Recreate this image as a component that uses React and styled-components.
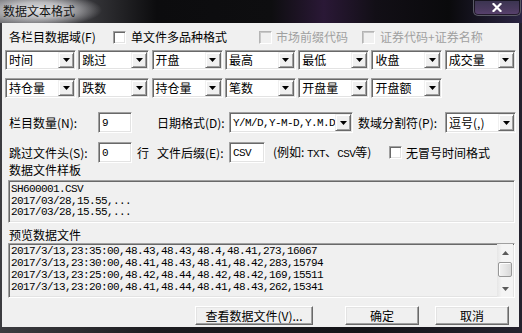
import React from 'react';
import styled, { createGlobalStyle } from 'styled-components';

const CJK = `"Noto Sans CJK SC", "Noto Sans", sans-serif`;
const MONO = `"Liberation Mono", "Noto Sans CJK SC", monospace`;

const Global = createGlobalStyle`
  html, body { margin: 0; padding: 0; background: #141416; }
  body { width: 522px; height: 333px; overflow: hidden; font-family: ${CJK}; }
`;

const Window = styled.div`
  width: 522px;
  height: 333px;
  box-sizing: border-box;
  display: flex;
  flex-direction: column;
  background: linear-gradient(90deg, #3c3c40 0%, #1c1c20 30%, #141418 70%, #24222e 100%);
`;

const TitleBar = styled.div`
  height: 23px;
  flex: none;
  display: flex;
  justify-content: space-between;
  align-items: flex-start;
  background:
    radial-gradient(ellipse 64px 17px at 38px 10px, rgba(228,228,230,0.97) 0%, rgba(205,205,208,0.85) 45%, rgba(140,140,145,0) 100%),
    linear-gradient(90deg, #6a6a6e 0%, #3a3a3e 16%, #0c0c0e 30%, #0e0e10 52%, #2a1836 62%, #120f16 72%, #0a0a0c 86%, #2a2442 100%);
`;

const TitleText = styled.span`
  font: 12px/14px ${CJK};
  color: #141414;
  margin: 4px 0 0 3px;
`;

const CloseBtn = styled.span`
  width: 48px;
  height: 16px;
  margin-right: 1px;
  box-sizing: border-box;
  border: 1px solid #5a5a66;
  border-top: none;
  border-radius: 0 0 5px 5px;
  background: linear-gradient(180deg, #3a3450 0%, #4a3a5e 60%, #5a4270 100%);
  box-shadow: inset 0 0 0 1px rgba(0,0,0,0.6);
  display: flex;
  align-items: center;
  justify-content: center;
`;

const Client = styled.div`
  flex: 1;
  margin: 0 3px 6px 2px;
  background: #f0f0f0;
  box-sizing: border-box;
  padding: 6px 3px 0 3px;
  display: flex;
  flex-direction: column;
  color: #000;
  font: 12px/16px ${CJK};
`;

const CheckRow = styled.div`
  height: 16px;
  display: flex;
  align-items: center;
  padding-left: 4px;
`;

const Cell = styled.div`
  width: ${p => p.$w}px;
  flex: none;
  display: flex;
  align-items: center;
  gap: ${p => p.$gap ?? 5}px;
  padding-left: ${p => p.$pl || 0}px;
  box-sizing: border-box;
  white-space: nowrap;
  color: ${p => (p.$disabled ? '#a0a0a0' : '#000')};
`;

const CheckBox = styled.span`
  width: 13px;
  height: 13px;
  box-sizing: border-box;
  flex: none;
  background: ${p => (p.$disabled ? '#f0f0f0' : '#fff')};
  border: 1px solid;
  border-color: ${p => (p.$disabled ? '#b4b4b4 #fff #fff #b4b4b4' : '#a0a0a0 #fff #fff #a0a0a0')};
  box-shadow: ${p => (p.$disabled ? 'inset 1px 1px 0 #c8c8c8' : 'inset 1px 1px 0 #696969, inset -1px -1px 0 #e3e3e3')};
`;

const ComboGrid = styled.div`
  margin-top: 5px;
  display: grid;
  grid-template-columns: repeat(7, 71px);
  column-gap: 2.3px;
  row-gap: 8px;
`;

const ComboBox = styled.div`
  box-sizing: border-box;
  width: ${p => (p.$w ? `${p.$w}px` : 'auto')};
  height: ${p => p.$h || 20}px;
  flex: none;
  display: flex;
  background: #fff;
  border: 1px solid;
  border-color: #a0a0a0 #fff #fff #a0a0a0;
  box-shadow: inset 1px 1px 0 #696969, inset -1px -1px 0 #e3e3e3;
  padding: 1px;
`;

const ComboText = styled.span`
  flex: 1;
  min-width: 0;
  overflow: hidden;
  white-space: nowrap;
  display: flex;
  align-items: center;
  padding-left: 2px;
  font: ${p => (p.$mono ? `11px/14px ${MONO}` : `12px/14px ${CJK}`)};
  letter-spacing: ${p => (p.$mono ? '-0.6px' : '0')};
`;

const DropBtn = styled.span`
  width: 16px;
  flex: none;
  box-sizing: border-box;
  background: #f0f0f0;
  border: 1px solid;
  border-color: #f0f0f0 #696969 #696969 #f0f0f0;
  box-shadow: inset 1px 1px 0 #fff, inset -1px -1px 0 #a0a0a0;
  display: flex;
  align-items: center;
  justify-content: center;
`;

const FieldRow = styled.div`
  margin-top: ${p => p.$mt}px;
  height: 21px;
  display: flex;
  align-items: center;
`;

const Label = styled.span`
  width: ${p => p.$w}px;
  flex: none;
  padding-left: ${p => p.$pl || 0}px;
  box-sizing: border-box;
  white-space: nowrap;
`;

const TextInput = styled.div`
  width: ${p => p.$w}px;
  height: 21px;
  flex: none;
  box-sizing: border-box;
  background: #fff;
  border: 1px solid;
  border-color: #a0a0a0 #fff #fff #a0a0a0;
  box-shadow: inset 1px 1px 0 #696969, inset -1px -1px 0 #e3e3e3;
  padding: 0 3px;
  display: flex;
  align-items: center;
  font: 11px/14px ${MONO};
  letter-spacing: -0.6px;
`;

const Note = styled.span`
  width: ${p => p.$w}px;
  margin-left: ${p => p.$ml || 0}px;
  flex: none;
  white-space: nowrap;
`;

const Mono = styled.span`
  font: 11px/14px ${MONO};
  letter-spacing: -0.6px;
`;

const SectionLabel = styled.div`
  margin-top: ${p => p.$mt}px;
  height: 12px;
  line-height: 12px;
  padding-left: 4px;
`;

const ReadBox = styled.div`
  margin: ${p => p.$mt}px 1px 0 3px;
  height: ${p => p.$h}px;
  box-sizing: border-box;
  background: #f0f0f0;
  border: 1px solid;
  border-color: #a0a0a0 #fff #fff #a0a0a0;
  box-shadow: inset 1px 1px 0 #696969, inset -1px -1px 0 #e3e3e3;
  padding: ${p => p.$pt || 1}px 1px 1px 2px;
  display: flex;
  overflow: hidden;
`;

const Lines = styled.div`
  flex: 1;
  min-width: 0;
  font: 11px/${p => p.$lh || 12}px ${MONO};
  letter-spacing: -0.6px;
  white-space: pre;
  overflow: hidden;
`;

const ScrollBar = styled.div`
  width: 16px;
  flex: none;
  margin: -1px 0 -1px 0;
  background: linear-gradient(90deg, #e6e6e6, #f4f4f4 30%, #f4f4f4);
  display: flex;
  flex-direction: column;
  align-items: center;
`;

const Arrow = styled.div`
  height: 17px;
  width: 100%;
  flex: none;
  display: flex;
  align-items: center;
  justify-content: center;
`;

const Track = styled.div`
  flex: 1;
`;

const Thumb = styled.div`
  width: 14px;
  height: 15px;
  box-sizing: border-box;
  margin-top: 1px;
  border: 1px solid #979797;
  border-radius: 2px;
  background: linear-gradient(90deg, #f2f2f2, #e6e6e6 50%, #d8d8d8);
  box-shadow: inset 1px 1px 0 #fff;
`;

const ButtonRow = styled.div`
  margin-top: 8px;
  height: 19px;
  display: flex;
  padding-left: 190px;
`;

const Button = styled.div`
  width: ${p => p.$w}px;
  margin-left: ${p => p.$ml || 0}px;
  height: 19px;
  box-sizing: border-box;
  flex: none;
  background: #f0f0f0;
  border: 1px solid;
  border-color: #fff #696969 #696969 #fff;
  box-shadow: inset -1px -1px 0 #a0a0a0, inset 1px 1px 0 #e3e3e3;
  display: flex;
  align-items: center;
  justify-content: center;
  font: 12px/14px ${CJK};
  white-space: nowrap;
`;

const Tri = ({ up, color = '#000', w = 7, h = 4 }) => (
  <svg width={w} height={h} viewBox={`0 0 ${w} ${h}`}>
    <polygon points={up ? `0,${h} ${w},${h} ${w / 2},0` : `0,0 ${w},0 ${w / 2},${h}`} fill={color} />
  </svg>
);

const Combo = ({ text, w, h, mono }) => (
  <ComboBox $w={w} $h={h}>
    <ComboText $mono={mono}>{text}</ComboText>
    <DropBtn>
      <Tri />
    </DropBtn>
  </ComboBox>
);

const row1 = ['时间', '跳过', '开盘', '最高', '最低', '收盘', '成交量'];
const row2 = ['持仓量', '跌数', '持仓量', '笔数', '开盘量', '开盘额'];
const sample = ['SH600001.CSV', '2017/03/28,15.55,...', '2017/03/28,15.55,...'];
const preview = [
  '2017/3/13,23:35:00,48.43,48.43,48.4,48.41,273,16067',
  '2017/3/13,23:30:00,48.41,48.43,48.41,48.42,283,15794',
  '2017/3/13,23:25:00,48.42,48.44,48.42,48.42,169,15511',
  '2017/3/13,23:20:00,48.41,48.44,48.41,48.43,262,15341',
];

export default function App() {
  return (
    <>
      <Global />
      <Window>
        <TitleBar>
          <TitleText>数据文本格式</TitleText>
          <CloseBtn>
            <svg width="10" height="9" viewBox="0 0 10 9">
              <path d="M1.5 1 L8.5 8 M8.5 1 L1.5 8" stroke="#fff" strokeWidth="2.2" strokeLinecap="square" />
            </svg>
          </CloseBtn>
        </TitleBar>
        <Client>
          <CheckRow>
            <Cell $w={104}>各栏目数据域(F)</Cell>
            <Cell $w={146}>
              <CheckBox />
              <span>单文件多品种格式</span>
            </Cell>
            <Cell $w={103} $disabled $gap={4}>
              <CheckBox $disabled />
              <span>市场前缀代码</span>
            </Cell>
            <Cell $w={150} $disabled>
              <CheckBox $disabled />
              <span>证券代码+证券名称</span>
            </Cell>
          </CheckRow>

          <ComboGrid>
            {row1.map((t, i) => (
              <Combo key={`a${i}`} text={t} />
            ))}
            {row2.map((t, i) => (
              <Combo key={`b${i}`} text={t} />
            ))}
          </ComboGrid>

          <FieldRow $mt={14}>
            <Label $w={93} $pl={4}>栏目数量(N):</Label>
            <TextInput $w={34}>9</TextInput>
            <Label $w={25} />
            <Label $w={72}>日期格式(D):</Label>
            <Combo text="Y/M/D,Y-M-D,Y.M.D" w={124} h={21} mono />
            <Label $w={92} $pl={5}>数域分割符(P):</Label>
            <Combo text="逗号(,)" w={71} h={21} />
          </FieldRow>

          <FieldRow $mt={9}>
            <Label $w={93} $pl={4}>跳过文件头(S):</Label>
            <TextInput $w={34}>0</TextInput>
            <Label $w={25} $pl={5}>行</Label>
            <Label $w={72}>文件后缀(E):</Label>
            <TextInput $w={36}>CSV</TextInput>
            <Note $w={116} $ml={8}>
              (例如: <Mono>TXT</Mono>、<Mono>CSV</Mono>等)
            </Note>
            <Cell $w={120} $gap={4}>
              <CheckBox />
              <span>无冒号时间格式</span>
            </Cell>
          </FieldRow>

          <SectionLabel $mt={1}>数据文件样板</SectionLabel>
          <ReadBox $mt={4} $h={43} $pt={3}>
            <Lines $lh={11.5}>{sample.join('\n')}</Lines>
          </ReadBox>

          <SectionLabel $mt={6}>预览数据文件</SectionLabel>
          <ReadBox $mt={2} $h={55} $pt={1}>
            <Lines $lh={12}>{preview.join('\n')}</Lines>
            <ScrollBar>
              <Arrow>
                <Tri up color="#5a5a5a" w={7} h={4} />
              </Arrow>
              <Thumb />
              <Track />
              <Arrow>
                <Tri color="#5a5a5a" w={7} h={4} />
              </Arrow>
            </ScrollBar>
          </ReadBox>

          <ButtonRow>
            <Button $w={118}>查看数据文件(V)...</Button>
            <Button $w={74} $ml={32}>确定</Button>
            <Button $w={74} $ml={16}>取消</Button>
          </ButtonRow>
        </Client>
      </Window>
    </>
  );
}
